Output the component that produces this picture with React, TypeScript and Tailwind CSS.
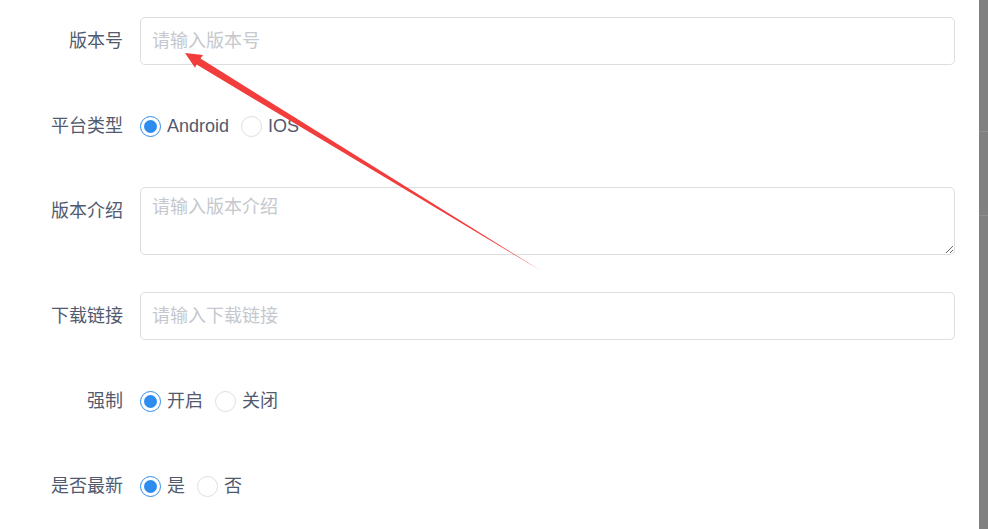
import React from "react";

const labelCls = "w-[123px] shrink-0 text-right leading-[48px] text-[#515a6e]";
const boxCls =
  "block w-full rounded-[5px] border border-[#dcdee2] bg-white px-[11px] text-[18px] text-[#515a6e] outline-none placeholder:text-[#c5c8ce]";

function Radio({ label, checked }: { label: string; checked?: boolean }) {
  return (
    <label className="flex items-center">
      <span
        className={`flex h-[21px] w-[21px] items-center justify-center rounded-full bg-white ${
          checked ? "border-[1.5px] border-[#2d8cf0]" : "border border-[#dcdee2]"
        }`}
      >
        {checked && <span className="h-[13px] w-[13px] rounded-full bg-[#2d8cf0]" />}
      </span>
      <span className="ml-[6px]">{label}</span>
    </label>
  );
}

function RadioGroup({ options }: { options: string[] }) {
  return (
    <div className="flex h-[48px] items-center gap-[12px] text-[#515a6e]">
      {options.map((o, i) => (
        <Radio key={o} label={o} checked={i === 0} />
      ))}
    </div>
  );
}

function Row({ label, children }: { label: string; children: React.ReactNode }) {
  return (
    <div className="flex items-start">
      <div className={labelCls}>{label}</div>
      <div className="ml-[17px] flex-1">{children}</div>
    </div>
  );
}

export default function App() {
  return (
    <div
      className="relative flex h-[529px] w-[988px] overflow-hidden bg-white text-[18px]"
      style={{ fontFamily: '"Liberation Sans", "Noto Sans CJK SC", sans-serif' }}
    >
      <div className="flex flex-1 flex-col gap-[37px] pt-[17px] pr-[24px]">
        <Row label="版本号">
          <input className={`${boxCls} h-[48px]`} placeholder="请输入版本号" />
        </Row>
        <Row label="平台类型">
          <RadioGroup options={["Android", "IOS"]} />
        </Row>
        <Row label="版本介绍">
          <textarea className={`${boxCls} h-[68px] resize-y py-[6px] leading-[26px]`} placeholder="请输入版本介绍" />
        </Row>
        <Row label="下载链接">
          <input className={`${boxCls} h-[48px]`} placeholder="请输入下载链接" />
        </Row>
        <Row label="强制">
          <RadioGroup options={["开启", "关闭"]} />
        </Row>
        <Row label="是否最新">
          <RadioGroup options={["是", "否"]} />
        </Row>
      </div>

      {/* scrollbar */}
      <div className="flex w-[9px] shrink-0 flex-col bg-[#808080]">
        <div className="h-[132px] border-b border-[#8e8e8e]" />
        <div className="h-[84px] border-b border-[#8e8e8e]" />
      </div>

      {/* annotation arrow */}
      <svg className="pointer-events-none absolute left-0 top-0" width="988" height="529">
        <polygon
          points="185,53 203,55 200.5,58.6 541.5,271 196.6,64.6 195,67.8"
          fill="#f23d3d"
        />
      </svg>
    </div>
  );
}
